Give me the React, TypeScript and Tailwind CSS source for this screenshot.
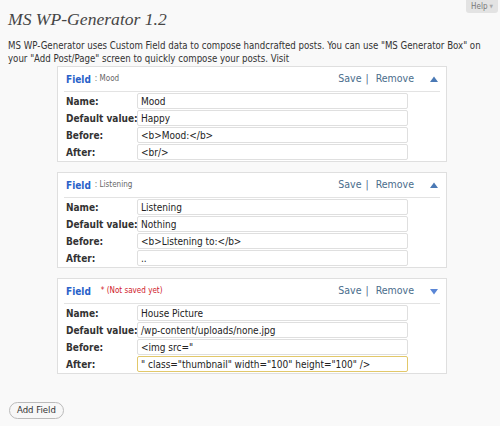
import React from "react";

type Row = { label: string; value: string; focus?: boolean };
type Box = { sub: string; notSaved?: boolean; rows: Row[]; down?: boolean };

const boxes: Box[] = [
  {
    sub: "Mood",
    rows: [
      { label: "Name:", value: "Mood" },
      { label: "Default value:", value: "Happy" },
      { label: "Before:", value: "<b>Mood:</b>" },
      { label: "After:", value: "<br/>" },
    ],
  },
  {
    sub: "Listening",
    rows: [
      { label: "Name:", value: "Listening" },
      { label: "Default value:", value: "Nothing" },
      { label: "Before:", value: "<b>Listening to:</b>" },
      { label: "After:", value: ".." },
    ],
  },
  {
    sub: "* (Not saved yet)",
    notSaved: true,
    down: true,
    rows: [
      { label: "Name:", value: "House Picture" },
      { label: "Default value:", value: "/wp-content/uploads/none.jpg" },
      { label: "Before:", value: '<img src="' },
      { label: "After:", value: '" class="thumbnail" width="100" height="100" />', focus: true },
    ],
  },
];

function FieldBox({ box }: { box: Box }) {
  return (
    <div className="ml-[57px] h-[96px] w-[390px] border border-[#dfdfdf] bg-white px-[6px]">
      <div className="flex h-[25px] items-center border-b border-[#e3e3e3] pl-[2px] pr-[2px]">
        <span className="text-[10px] font-bold text-[#2a62c9]">Field</span>
        {box.notSaved ? (
          <span className="ml-[10px] text-[8px] text-[#d0202a]">{box.sub}</span>
        ) : (
          <span className="ml-[4px] text-[8px] text-[#666]">: {box.sub}</span>
        )}
        <span className="ml-auto text-[10.5px] text-[#4a6d8c]">Save</span>
        <span className="ml-[4px] mr-[7px] text-[10.5px] text-[#4a6d8c]">|</span>
        <span className="text-[10.5px] text-[#4a6d8c]">Remove</span>
        <svg width="8" height="7" viewBox="0 0 8 7" className="ml-[16px]">
          {box.down ? (
            <polygon points="0,1 8,1 4,6.5" fill="#5a86d6" />
          ) : (
            <polygon points="0,6 8,6 4,0.5" fill="#4a79b5" />
          )}
        </svg>
      </div>
      <div className="mt-[1px] flex flex-col gap-[1px]">
        {box.rows.map((r) => (
          <div key={r.label} className="flex h-[16px] items-center">
            <div className="w-[73px] whitespace-nowrap pl-[2px] text-[10px] font-bold text-[#333]">{r.label}</div>
            <div
              className={
                "flex h-[16px] w-[271px] items-center rounded-[2px] border bg-white pl-[3px] text-[10px] text-[#222] " +
                (r.focus ? "border-[#e2c86a]" : "border-[#dfdfdf]")
              }
            >
              <span className="whitespace-pre">{r.value}</span>
            </div>
          </div>
        ))}
      </div>
    </div>
  );
}

export default function App() {
  return (
    <div
      className="relative h-[426px] w-[500px] overflow-hidden bg-[#f9f9f9] text-[#333]"
      style={{ fontFamily: '"DejaVu Sans Condensed", "DejaVu Sans", Verdana, sans-serif' }}
    >
      <div className="absolute right-[2px] top-0 flex h-[13px] w-[32px] items-center justify-center rounded-b-[3px] bg-[#e3e3e3] text-[8px] text-[#777]">
        Help <span className="ml-[2px] text-[5px] text-[#aaa]">▼</span>
      </div>
      <div className="px-[8px] pt-[8px]">
        <h1
          className="text-[17.6px] italic leading-[22px] text-[#464646]"
          style={{ fontFamily: '"Liberation Serif", serif' }}
        >
          MS WP-Generator 1.2
        </h1>
        <p className="mt-[9px] text-[9.6px] leading-[13px] text-[#333]">
          MS WP-Generator uses Custom Field data to compose handcrafted posts. You can use "MS Generator Box" on your "Add Post/Page" screen to quickly compose your posts. Visit
        </p>
      </div>
      <div className="mt-[1px] flex flex-col gap-[10px]">
        {boxes.map((b, i) => (
          <FieldBox key={i} box={b} />
        ))}
      </div>
      <div className="px-[9px] pt-[28px]">
        <button className="flex h-[17px] items-center rounded-full border border-[#bbb] bg-[#f7f7f7] px-[7px] text-[9.5px] text-[#333]">
          Add Field
        </button>
      </div>
    </div>
  );
}
